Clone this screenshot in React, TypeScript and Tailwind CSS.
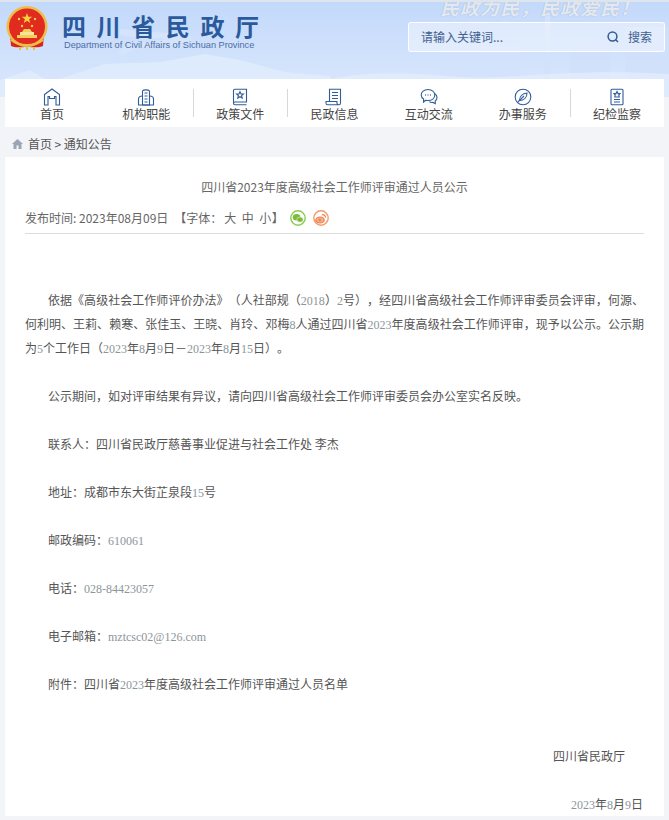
import type { ReactNode } from 'react'

const cjk = "font-['Noto_Sans_CJK_SC','Noto_Sans',sans-serif] [text-spacing-trim:space-all]"

// digits in the article sit in a lighter serif face
function N({ children }: { children: ReactNode }) {
  return <span className="font-['Liberation_Serif',serif] leading-none text-[#8b9699]">{children}</span>
}

function Emblem() {
  return (
    <svg width="42" height="44" viewBox="0 0 42 44" className="shrink-0">
      {/* ribbon under the ring */}
      <path d="M4 28 H38 L37 40 C33 42 28 41 21 41 C14 41 9 42 5 40 Z" fill="#d9241b" />
      <circle cx="21" cy="20.5" r="20.5" fill="#eebd45" />
      <circle cx="21" cy="20.5" r="18" fill="#e12a20" />
      <polygon points="21,7 22.3,10.8 26.2,10.8 23.1,13.2 24.2,17 21,14.7 17.8,17 18.9,13.2 15.8,10.8 19.7,10.8" fill="#f5d33f" />
      <circle cx="13" cy="13" r="1.2" fill="#f5d33f" />
      <circle cx="29" cy="13" r="1.2" fill="#f5d33f" />
      <circle cx="16" cy="20" r="1.2" fill="#f5d33f" />
      <circle cx="26" cy="20" r="1.2" fill="#f5d33f" />
      {/* gate */}
      <polygon points="16,26 26,26 24,23 18,23" fill="#f3cf5a" />
      <rect x="14" y="26" width="14" height="3" fill="#f7e39a" />
      <rect x="11" y="29" width="20" height="3" fill="#f3cf5a" />
      <path d="M5 34 C10 38 15 39 21 39 C27 39 32 38 37 34" fill="none" stroke="#eebd45" strokeWidth="2" />
      <path d="M14 41 V44 M21 41 V44 M28 41 V44" stroke="#eebd45" strokeWidth="2" />
    </svg>
  )
}

const iconProps = {
  width: 18,
  height: 18,
  viewBox: '0 0 18 18',
  fill: 'none',
  stroke: '#2f5d9b',
  strokeWidth: 1.1,
}

const navItems: { label: string; divider?: boolean; icon: ReactNode }[] = [
  {
    label: '首页',
    icon: (
      <svg {...iconProps}>
        <path d="M1.5 6.5 L9 1 L16.5 6.5 V17 H13 V8.5 H11.5 V10.5 H6.5 V8.5 H5 V17 H1.5 Z" />
      </svg>
    ),
  },
  {
    label: '机构职能',
    divider: true,
    icon: (
      <svg {...iconProps}>
        <path d="M5.5 17 V3 C6.5 1.5 11.5 1.5 12.5 3 V17 Z" />
        <path d="M5.5 8 C3 8 1.5 9 1.5 11 V17 H16.5 V11 C16.5 9 15 8 12.5 8" />
        <path d="M7.5 5 H10.5 M7.5 8 H10.5 M7.5 11 H10.5 M7.5 14 H10.5" />
      </svg>
    ),
  },
  {
    label: '政策文件',
    divider: true,
    icon: (
      <svg {...iconProps}>
        <path d="M2.5 15 V2.5 C2.5 1.8 3 1.2 3.8 1.2 H15.5 V14 H4 C3 14 2.5 14.5 2.5 15.3 C2.5 16.2 3 16.8 4 16.8 H15.5" />
        <path d="M9 3.6 L10 6 H12.4 L10.6 7.6 L11.2 10 L9 8.7 L6.8 10 L7.4 7.6 L5.6 6 H8 Z" />
      </svg>
    ),
  },
  {
    label: '民政信息',
    icon: (
      <svg {...iconProps}>
        <path d="M4.5 13.5 V1.2 H15.5 V15 C15.5 16 15 16.8 14 16.8 H2.5 C1.5 16.8 1 16 1 15 V13.5 H12 V15.5 C12 16.3 12.8 16.8 14 16.8" />
        <path d="M7 4.5 H13 M7 7.5 H13 M7 10.5 H13" />
      </svg>
    ),
  },
  {
    label: '互动交流',
    icon: (
      <svg {...iconProps}>
        <path d="M8 1.5 C12 1.5 14.8 4 14.8 7 C14.8 10.2 12 12.5 8 12.5 C7.2 12.5 6.5 12.4 5.8 12.2 L3.5 14 L3.6 11 C2 10 1.2 8.6 1.2 7 C1.2 4 4 1.5 8 1.5 Z" />
        <path d="M15 5.8 C16.3 6.8 17 8 17 9.6 C17 11 16.3 12.2 15.2 13 L15.3 15.6 L12.8 14.4 C11.6 14.7 10.3 14.4 9.3 13.6" />
        <path d="M5.2 7 H6 M7.6 7 H8.4 M10 7 H10.8" strokeWidth="1.3" />
      </svg>
    ),
  },
  {
    label: '办事服务',
    divider: true,
    icon: (
      <svg {...iconProps}>
        <circle cx="9" cy="9" r="7.8" />
        <path d="M5.5 12.5 C5.5 8.5 8.5 5.5 13 5 C13 9.5 10 12.5 5.5 12.5 Z" />
        <path d="M3.8 14.2 L10 8" />
      </svg>
    ),
  },
  {
    label: '纪检监察',
    icon: (
      <svg {...iconProps}>
        <rect x="3" y="1.2" width="12" height="15.6" rx="1" />
        <path d="M9 3.6 L10 5.6 H12 L10.8 7.2 L11.2 9 H6.8 L7.2 7.2 L6 5.6 H8 Z" />
        <path d="M6 11.5 H12 M6 14 H12" />
      </svg>
    ),
  },
]

function Header() {
  return (
    <div className="relative h-[97px] overflow-hidden border-t-2 border-[#dfe5ec] bg-gradient-to-b from-[#c3d9fb] to-[#dbe8fc]">
      {/* faint city and road drawing behind the banner */}
      <svg className="absolute inset-0" width="669" height="97" viewBox="0 0 669 97">
        <path d="M0 78 L30 68 L50 80 L105 62 L160 60 L205 52 L240 58 L285 70 L330 74 L340 97 L0 97 Z" fill="#e2edfd" opacity="0.75" />
        <path d="M120 30 C150 35 170 32 190 36 C160 44 130 40 120 52" stroke="#d6e4fb" strokeWidth="6" fill="none" />
        <path d="M440 97 V52 H480 V45 H520 V97 Z" fill="#d3e2fb" opacity="0.8" />
        <rect x="545" y="12" width="5" height="85" fill="#d3e2fb" />
        <path d="M570 97 V40 H610 V97 Z M625 97 V25 H669 V97 Z" fill="#d0e0fb" opacity="0.7" />
        <path d="M335 97 V76 C380 68 420 72 460 75 C510 78 570 66 669 72 V97 Z" fill="#e2edfd" opacity="0.8" />
      </svg>

      <div className="relative flex items-start justify-between pl-[6px] pr-1 pt-1">
        <div className="flex items-start gap-[14px]">
          <Emblem />
          <div className="pt-[6px]">
            <div className={`${cjk} text-[24px] font-bold leading-[28px] tracking-[10.6px] text-[#2a5a9c]`}>四川省民政厅</div>
            <div className="ml-[2px] whitespace-nowrap font-['Liberation_Sans',sans-serif] text-[9.2px] leading-[11px] text-[#4a6ea6]">
              Department of Civil Affairs of Sichuan Province
            </div>
          </div>
        </div>

        <div>
          <div className={`${cjk} absolute left-[440px] top-[-9px] whitespace-nowrap text-[19px] italic font-bold tracking-[1px] text-white/75 [text-shadow:0_0_1px_#8fa3bf]`}>
            民政为民，民政爱民！
          </div>
          <div className="mt-4 flex h-[30px] w-[257px] items-center justify-between rounded-[3px] border border-white/90 bg-white/40 pl-3 pr-3">
            <span className={`${cjk} text-[12px] text-[#41608f]`}>请输入关键词...</span>
            <div className="flex items-center gap-[9px]">
              <svg width="12" height="12" viewBox="0 0 12 12" fill="none" stroke="#2f5d9b" strokeWidth="1.5">
                <circle cx="5.5" cy="5.5" r="4.4" />
                <path d="M8.7 8.7 L11 11" />
              </svg>
              <span className={`${cjk} text-[12px] text-[#41608f]`}>搜索</span>
            </div>
          </div>
        </div>
      </div>
    </div>
  )
}

function Nav() {
  return (
    <div className="relative mx-[5px] mt-[-18px] grid h-[48px] grid-cols-7 bg-white">
      {navItems.map(item => (
        <div key={item.label} className="relative flex flex-col items-center pt-[9px]">
          {item.icon}
          <span className={`${cjk} mt-[-1px] text-[12px] leading-[17px] text-[#444]`}>{item.label}</span>
          {item.divider && <div className="absolute right-[-1px] top-[10px] h-[28px] w-px bg-[#d8d8d8]" />}
        </div>
      ))}
    </div>
  )
}

function Breadcrumb() {
  return (
    <div className={`${cjk} flex h-[30px] items-center pl-[12px] pt-[3px] text-[12px] text-[#555]`}>
      <svg width="11" height="10" viewBox="0 0 11 10" className="mr-[5px]" fill="#9aa6b5">
        <path d="M5.5 0 L11 5 H9.5 V10 H6.5 V6.5 H4.5 V10 H1.5 V5 H0 Z" />
      </svg>
      <span>首页</span>
      <span className="mx-[2.5px]">&gt;</span>
      <span>通知公告</span>
    </div>
  )
}

function Article() {
  return (
    <div className={`${cjk} mx-[5px] bg-white px-5 text-[12px] text-[#555]`}>
      <div className="pt-[22px] text-center leading-[16px] text-[#666]">四川省2023年度高级社会工作师评审通过人员公示</div>

      <div className="mt-[13px] flex h-[20px] items-center text-[#666]">
        <span>发布时间: 2023年08月09日</span>
        <span className="ml-[6px]">【字体：</span>
        <span className="ml-[2px] tracking-[5.5px]">大中小</span>
        <span className="ml-[-5px]">】</span>
        <svg width="16" height="16" viewBox="0 0 16 16" className="ml-[6px]">
          <circle cx="8" cy="8" r="7.2" fill="#fff" stroke="#8ccb52" strokeWidth="1.4" />
          <ellipse cx="6.6" cy="7.2" rx="3.8" ry="3.3" fill="#7dbb3b" />
          <ellipse cx="10" cy="9.6" rx="3.2" ry="2.6" fill="#7dbb3b" stroke="#fff" strokeWidth="0.5" />
        </svg>
        <svg width="16" height="16" viewBox="0 0 16 16" className="ml-[7px]">
          <circle cx="8" cy="8" r="7.2" fill="#fff" stroke="#f49a6c" strokeWidth="1.4" />
          <ellipse cx="7" cy="10" rx="4.2" ry="3" fill="#f7b08c" stroke="#ee7c47" strokeWidth="1.2" />
          <circle cx="6.8" cy="10" r="1.2" fill="#ee7c47" />
          <path d="M9 4.8 C11 4.4 12.6 5.6 12.4 7.6" fill="none" stroke="#ee7c47" strokeWidth="1.2" />
        </svg>
      </div>

      <div className="mt-[5px] h-px bg-[#dcdcdc]" />

      <div className="pt-[54px] leading-[24px]">
        <p className="indent-[23px] text-justify">
          依据《高级社会工作师评价办法》（人社部规（<N>2018</N>）<N>2</N>号），经四川省高级社会工作师评审委员会评审，何源、何利明、王莉、赖寒、张佳玉、王晓、肖玲、邓梅<N>8</N>人通过四川省<N>2023</N>年度高级社会工作师评审，现予以公示。公示期为<N>5</N>个工作日（<N>2023</N>年<N>8</N>月<N>9</N>日－<N>2023</N>年<N>8</N>月<N>15</N>日）。
        </p>
        <p className="mt-6 indent-[23px]">公示期间，如对评审结果有异议，请向四川省高级社会工作师评审委员会办公室实名反映。</p>
        <p className="mt-6 indent-[23px]">联系人：四川省民政厅慈善事业促进与社会工作处 李杰</p>
        <p className="mt-6 indent-[23px]">地址：成都市东大街芷泉段<N>15</N>号</p>
        <p className="mt-6 indent-[23px]">邮政编码：<N>610061</N></p>
        <p className="mt-6 indent-[23px]">电话：<N>028-84423057</N></p>
        <p className="mt-6 indent-[23px]">电子邮箱：<N>mztcsc02@126.com</N></p>
        <p className="mt-6 indent-[23px]">附件：四川省<N>2023</N>年度高级社会工作师评审通过人员名单</p>
        <p className="mt-12 pr-[19px] text-right">四川省民政厅</p>
        <p className="mt-6 pr-[1px] text-right"><N>2023</N>年<N>8</N>月<N>9</N>日</p>
      </div>
    </div>
  )
}

export default function App() {
  return (
    <div className="h-[820px] overflow-hidden bg-[#f2f4f8]">
      <Header />
      <Nav />
      <Breadcrumb />
      <Article />
    </div>
  )
}
